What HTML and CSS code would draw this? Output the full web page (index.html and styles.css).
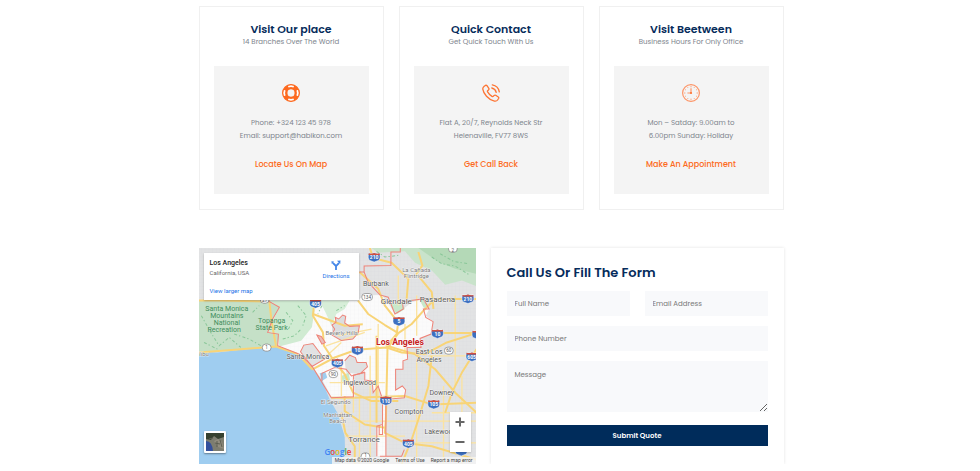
FILE: index.html
```html
<!DOCTYPE html>
<html lang="en">
<head>
  <meta charset="UTF-8">
  <meta name="viewport" content="width=device-width, initial-scale=1">
  <title>Contact</title>
  <link rel="stylesheet" href="styles.css">
</head>
<body>
  <main class="container">
    <section class="cards">
      <article class="card">
        <h2>Visit Our place</h2>
        <p class="subtitle">14 Branches Over The World</p>
        <div class="card-box">
          <svg class="icon" viewBox="0 0 18 18" fill="none" stroke="#fd6a20">
            <circle cx="9" cy="9" r="6.2" stroke-width="4.6"/>
            <g stroke="#fff" stroke-width="2">
              <path d="M6.2 2.6Q9 1.6 11.8 2.6M6.2 15.4Q9 16.4 11.8 15.4M2.6 6.2Q1.6 9 2.6 11.8M15.4 6.2Q16.4 9 15.4 11.8"/>
            </g>
            <circle cx="9" cy="9" r="8.4" stroke-width="1.1"/>
            <circle cx="9" cy="9" r="4.2" stroke-width="1.1"/>
          </svg>
          <p>Phone: +324 123 45 978<br>Email: support@habikon.com</p>
          <a href="#map">Locate Us On Map</a>
        </div>
      </article>
      <article class="card">
        <h2>Quick Contact</h2>
        <p class="subtitle">Get Quick Touch With Us</p>
        <div class="card-box">
          <svg class="icon" viewBox="0 0 18 18" fill="none" stroke="#fd7433" stroke-width="1.3" stroke-linecap="round" stroke-linejoin="round">
            <path d="M2.2 2.3L3.4 1.4Q4.3.9 5 1.7L6.8 4.3Q7.3 5.2 6.5 5.9L5.6 6.7Q5.2 7.2 5.6 7.9Q7.2 10.7 10 12.4Q10.8 12.8 11.3 12.3L12.2 11.4Q12.9 10.8 13.7 11.3L16.3 13Q17.1 13.7 16.6 14.5L15.6 16Q14.6 17.5 12.4 17.1Q8.4 16.4 4.5 12.2Q1.2 8.6.8 5.2Q.6 3.5 2.2 2.3Z"/>
            <path d="M10.3.8Q16.3 1.8 17.3 7.8M9.8 4Q13.4 4.8 14.2 8.4"/>
          </svg>
          <p>Flat A, 20/7, Reynolds Neck Str<br>Helenaville, FV77 8WS</p>
          <a href="#form">Get Call Back</a>
        </div>
      </article>
      <article class="card">
        <h2>Visit Beetween</h2>
        <p class="subtitle">Business Hours For Only Office</p>
        <div class="card-box">
          <svg class="icon" viewBox="0 0 18 18" fill="none" stroke="#fd9567">
            <circle cx="9" cy="9" r="8.4" stroke-width="1.2"/>
            <path d="M9 2v1.4M9 14.6V16M2 9h1.4M14.6 9H16M5.5 3l.5.9M12.5 3l-.5.9M3 5.5l.9.5M15 5.5l-.9.5M3 12.5l.9-.5M15 12.5l-.9-.5M5.5 15l.5-.9M12.5 15l-.5-.9" stroke-width=".8"/>
            <path d="M9 4.2V9H5.4" stroke-width="1.2"/>
            <circle cx="9" cy="9" r="1.1" fill="#fd7433" stroke="none"/>
          </svg>
          <p>Mon – Satday: 9.00am to<br>6.00pm Sunday: Holiday</p>
          <a href="#form">Make An Appointment</a>
        </div>
      </article>
    </section>

    <section class="contact">
      <div class="map" id="map">
        <svg class="map-canvas" viewBox="3 8 831 645" preserveAspectRatio="xMidYMid slice">
          <defs>
            <pattern id="streets" width="11" height="11" patternUnits="userSpaceOnUse">
              <path d="M0 .5H11M.5 0V11" stroke="#d8d9da" stroke-width="1"/>
            </pattern>
            <pattern id="streets-light" width="12" height="12" patternUnits="userSpaceOnUse">
              <path d="M0 .5H12M.5 0V12" stroke="#f0f1f2" stroke-width="1"/>
            </pattern>
            <g id="shield">
              <path d="M-16-12Q-8-10 0-13Q8-10 16-12Q21 5 13 9L0 14L-13 9Q-21 5-16-12Z" fill="#3c6fc0" stroke="#fff" stroke-width="1.5"/>
              <path d="M-16-12Q-8-10 0-13Q8-10 16-12L17-7H-17Z" fill="#d2503f"/>
            </g>
          </defs>
          <rect x="3" y="8" width="831" height="645" fill="#e2e3e4"/>
          <rect x="3" y="8" width="831" height="645" fill="url(#streets)"/>

          <!-- hills and parks -->
          <path d="M3 165H215L245 185L300 165L340 220L330 260L240 300L3 322Z" fill="#c5e0c7"/>
          <path d="M478 8H834V122L790 105L740 118L700 75L650 52L620 18L540 22L520 8Z" fill="#c9e3cb"/>
          <path d="M660 8H834V85L770 70L720 50Z" fill="#b4d9b7"/>

          <!-- city of Los Angeles -->
          <path d="M215 165H480L495 150L550 148L570 172L590 205L615 190L640 170L675 160L692 190L682 210L704 228L698 265L665 278L668 300L626 305L630 340L614 345V370H592V432L612 420L622 432L618 455L563 460V630H536V540L553 535V460L540 420L525 440L522 405L500 402V380L466 388L470 452H400L372 400L342 360L305 325L240 300L242 265L212 260L225 220L245 185Z" fill="#fbfbfb"/>
          <path d="M215 165H480L495 150L550 148L570 172L590 205L615 190L640 170L675 160L692 190L682 210L704 228L698 265L665 278L668 300L626 305L630 340L614 345V370H592V432L612 420L622 432L618 455L563 460V630H536V540L553 535V460L540 420L525 440L522 405L500 402V380L466 388L470 452H400L372 400L342 360L305 325L240 300L242 265L212 260L225 220L245 185Z" fill="url(#streets-light)"/>
          <path d="M215 165H335L350 195L342 245L310 285L245 302L240 265L212 258L228 220L245 185Z" fill="#d0ebd2"/>
          <path d="M365 165H455L440 190L415 205L400 240L385 205Z" fill="#d7eed8"/>
          <path d="M575 175L608 170L620 190L596 205ZM430 390L452 380L456 402L434 408ZM664 165L678 160L690 180L677 188Z" fill="#c8e8ca"/>
          <path d="M402 238L414 230L412 215L422 220L434 208L443 212L440 232L455 242L484 240L480 262L464 280L430 284L402 268Z" fill="#dcdddf"/>
          <path d="M308 318L318 298L345 293L380 340L342 362Z" fill="#e1e2e3"/>
          <path d="M440 345L455 328L472 335L477 350L504 350L508 363L484 385L444 380Z" fill="#dfe0e1"/>
          <g fill="none" stroke="#8ac799" stroke-width="3" stroke-dasharray="9 6 4 7">
            <path d="M12 210L40 260L65 300L95 275L130 305M110 265L155 280L190 300M165 200L185 180M265 200L285 225L272 250M300 180L325 210L315 240M372 180L360 205M415 195L440 180M700 35L730 55L770 62L815 90M725 25L765 48L810 55M535 18L560 35L600 30M255 280L290 270L310 250M20 290L60 310"/>
          </g>

          <!-- ocean -->
          <path d="M3 318L60 320L130 312L240 303L300 325L345 370L373 405L395 460L418 500L440 570L441 615L425 653H3Z" fill="#9fcdf0"/>
          <path d="M365 382L382 378L388 395L372 405Z" fill="#9fcdf0"/>

          <!-- minor roads -->
          <g fill="none" stroke="#fbe3a0" stroke-width="4">
            <path d="M484 450V653M516 330V653M655 340V653M735 420V653M790 390V653M395 410H560M470 525H834M440 570H620M640 590H834M384 300L500 260M420 270L520 250M430 340V450M540 235V450M620 235V320M690 330H834M466 400V500M700 500H834M370 345L430 290M600 90V180M655 150V270M770 150V420"/>
          </g>
          <!-- freeways -->
          <g fill="none" stroke="#f8d477" stroke-width="6" stroke-linejoin="round">
            <path d="M3 165H60L215 168L222 230L235 300"/>
            <path d="M3 320L130 310L235 302L300 325L345 372"/>
            <path d="M350 165L345 210L375 260L378 300L408 345L440 385L465 440L520 465H600"/>
            <path d="M345 370L410 335L475 312L565 305L610 320L680 325L745 290L834 262"/>
            <path d="M484 80L540 130L560 180L600 230L595 265L565 300L650 325L710 370L770 440L834 500"/>
            <path d="M480 165L510 205L560 238L600 262L640 235L680 190L710 160H834"/>
            <path d="M515 8L525 38L580 52L630 100L625 160M660 20L672 60L655 85L700 140L705 190"/>
            <path d="M568 300L563 520L560 560L620 590L700 600L834 640"/>
            <path d="M345 205L440 240L494 236M470 455L620 450L700 475L834 470"/>
            <path d="M600 262L570 305M720 262L834 262M700 330L690 420L660 520L640 580L610 653"/>
            <path d="M834 310L790 380L760 440L740 500M440 450V495L500 535L560 545"/>
            <path d="M400 455H470M535 270V530M430 500L442 560L470 600V653"/>
          </g>
          <!-- city limits -->
          <g fill="none" stroke="#ee8378" stroke-width="3">
            <path d="M210 165L245 185L225 220L210 260L242 265L240 300L305 325L342 360L400 455L466 452V388L500 380V402L522 405L525 440L540 420L553 460V535L536 540V630M553 535V565H543V540M545 630H610L618 610"/>
            <path d="M498 82V62L578 60V20H606V8M484 80H498L510 110L545 148L570 155L590 205L615 190L612 168L675 160L692 190L675 190L682 215L704 228L698 265L665 278L668 305L626 305L628 340L614 345V370H592V432L612 420L622 432L618 455L563 460V630"/>
            <path d="M402 238L414 230L412 215L422 220L434 208L443 212L440 232L455 242L484 240L480 262L464 280L430 284L402 268L410 250Z"/>
            <path d="M308 318L318 298L345 293L380 340L342 362Z"/>
            <path d="M372 405V382L410 365L444 370L460 390L500 378M440 345L455 328L472 335L477 350L504 350L508 363L484 385"/>
            <path d="M357 268L370 272L382 290L372 295Z" fill="#ecbdb8"/>
          </g>

          <g class="shields">
            <use href="#shield" x="528" y="36"/><text x="528" y="42">210</text>
            <use href="#shield" x="808" y="160"/><text x="808" y="166">210</text>
            <use href="#shield" x="353" y="174"/><text x="353" y="180">405</text>
            <use href="#shield" x="602" y="227"/><text x="602" y="233">5</text>
            <use href="#shield" x="717" y="264"/><text x="717" y="270">10</text>
            <use href="#shield" x="478" y="314"/><text x="478" y="320">10</text>
            <use href="#shield" x="418" y="352"/><text x="418" y="358">405</text>
            <use href="#shield" x="563" y="464"/><text x="563" y="470">110</text>
            <use href="#shield" x="706" y="475"/><text x="706" y="481">105</text>
            <use href="#shield" x="630" y="592"/><text x="630" y="598">405</text>
            <use href="#shield" x="820" y="333"/><text x="819" y="339">605</text>
            <use href="#shield" x="838" y="267"/>
            <use href="#shield" x="788" y="615"/>
          </g>
          <g class="routes">
            <rect x="491" y="144" width="32" height="21" rx="10"/><text x="507" y="160">134</text>
            <rect x="194" y="295" width="26" height="21" rx="10"/><text x="207" y="311">1</text>
            <rect x="393" y="374" width="26" height="21" rx="10"/><text x="406" y="390">90</text>
            <rect x="738" y="304" width="26" height="21" rx="10"/><text x="751" y="320">60</text>
            <rect x="188" y="152" width="26" height="21" rx="10"/><text x="201" y="168">27</text>
            <rect x="750" y="0" width="26" height="21" rx="10"/><text x="763" y="19">2</text>
            <rect x="489" y="620" width="26" height="21" rx="10"/><text x="502" y="633">1</text>
          </g>

          <g class="parks">
            <text x="88" y="196">Santa Monica</text>
            <text x="88" y="218">Mountains</text>
            <text x="88" y="239">National</text>
            <text x="80" y="260">Recreation</text>
            <text x="222" y="232">Topanga</text>
            <text x="222" y="253">State Park</text>
          </g>
          <g class="towns">
            <text x="533" y="122">Burbank</text>
            <text x="330" y="339">Santa Monica</text>
            <text x="692" y="325">East Los</text>
            <text x="692" y="349">Angeles</text>
            <text x="485" y="418">Inglewood</text>
            <text x="730" y="446">Downey</text>
            <text x="632" y="505">Compton</text>
            <text x="726" y="562">Lakewood</text>
          </g>
          <g class="towns towns-large">
            <text x="594" y="176">Glendale</text>
            <text x="717" y="168">Pasadena</text>
            <text x="498" y="586">Torrance</text>
          </g>
          <g class="towns towns-small">
            <text x="654" y="80">La Cañada</text>
            <text x="654" y="98">Flintridge</text>
            <text x="431" y="267">Beverly Hills</text>
            <text x="413" y="473">El Segundo</text>
            <text x="419" y="512">Manhattan</text>
            <text x="419" y="530">Beach</text>
            <text x="20" y="331">libu</text>
          </g>
          <text class="city-name" x="605" y="297">Los Angeles</text>
        </svg>

        <div class="place">
          <div class="place-info">
            <strong>Los Angeles</strong>
            <span>California, USA</span>
            <a href="#map">View larger map</a>
          </div>
          <a class="directions" href="#map">
            <svg viewBox="0 0 10 10" fill="none" stroke="#4285e8" stroke-width="1.8">
              <path d="M5 10V6L8 3M5 6L1.8 2.8"/>
              <path d="M6 .8L9.5.5L9.2 4ZM.4 1.2L3 1.4L.8 4Z" fill="#4285e8" stroke="none"/>
            </svg>
            Directions
          </a>
        </div>

        <button class="satellite" type="button" aria-label="Satellite view">
          <svg viewBox="0 0 18 18">
            <rect width="18" height="18" fill="#7d7d70"/>
            <path d="M0 0H18V4L12 6L8 3L5 7L0 6Z" fill="#35402f"/>
            <path d="M8 8L12 6L16 9L18 16L12 14Z" fill="#918c7e"/>
            <path d="M3 6L7 5M9 10L14 11M11 8V14M14 7L16 14" stroke="#5d5f52"/>
            <path d="M0 8Q6 8 7 18H0Z" fill="#34509c"/>
          </svg>
        </button>

        <div class="zoom">
          <button type="button" aria-label="Zoom in"><svg viewBox="0 0 10 10"><path d="M5 .5V9.5M.5 5H9.5"/></svg></button>
          <button type="button" aria-label="Zoom out"><svg viewBox="0 0 10 10"><path d="M.5 5H9.5"/></svg></button>
        </div>

        <div class="google"><span class="blue">G</span><span class="red">o</span><span class="yellow">o</span><span class="blue">g</span><span class="green">l</span><span class="red">e</span></div>
        <div class="map-footer">
          <span>Map data ©2020 Google</span>
          <a href="#map">Terms of Use</a>
          <a href="#map">Report a map error</a>
        </div>
      </div>

      <form class="quote-form" id="form">
        <h2>Call Us Or Fill The Form</h2>
        <div class="fields">
          <input type="text" name="name" placeholder="Full Name" aria-label="Full Name">
          <input type="email" name="email" placeholder="Email Address" aria-label="Email Address">
          <input class="wide" type="tel" name="phone" placeholder="Phone Number" aria-label="Phone Number">
          <textarea class="wide" name="message" placeholder="Message" aria-label="Message"></textarea>
        </div>
        <button class="submit" type="submit">Submit Quote</button>
      </form>
    </section>
  </main>
</body>
</html>
```
FILE: styles.css
```css
* {
  box-sizing: border-box;
}
body {
  margin: 0;
  background: #fff;
  color: #7d848d;
  font-family: Poppins, Inter, sans-serif;
  font-size: 7px;
}
h2, p {
  margin: 0;
}
a {
  text-decoration: none;
}
button {
  padding: 0;
  border: none;
  cursor: pointer;
}
.container {
  max-width: 587px;
  margin: 0 auto;
  padding: 6px 0 0 2px;
}

/* info cards */
.cards {
  display: grid;
  grid-template-columns: repeat(3, 1fr);
  gap: 15px;
}
.card {
  padding: 14px 14px 15px;
  border: 1px solid #f0f0f0;
  text-align: center;
}
.card h2 {
  color: #062c5b;
  font-size: 11px;
  font-weight: 600;
  line-height: 16px;
}
.subtitle {
  line-height: 10px;
}
.card-box {
  margin-top: 19px;
  padding: 18px 8px 23px;
  background: #f4f4f4;
}
.icon {
  display: block;
  width: 18px;
  height: 18px;
  margin: 0 auto 14px;
}
.card-box p {
  line-height: 13px;
}
.card-box a {
  display: block;
  margin-top: 17px;
  color: #fd6a20;
  font-size: 8px;
  font-weight: 500;
  line-height: 12px;
}

/* map and form */
.contact {
  display: grid;
  grid-template-columns: 277fr 293fr;
  gap: 15px;
  margin-top: 38px;
}
.map {
  position: relative;
  overflow: hidden;
  font-family: Roboto, sans-serif;
}
.map-canvas {
  position: absolute;
  width: 100%;
  height: 100%;
}
.map-canvas text {
  text-anchor: middle;
}
.shields text {
  fill: #fff;
  font-size: 15px;
  font-weight: 700;
}
.routes rect {
  fill: #fff;
  stroke: #777;
  stroke-width: 2;
}
.routes text {
  fill: #555;
  font-size: 14px;
}
.parks text {
  fill: #3f8d5c;
  font-size: 21px;
}
.towns text {
  fill: #555;
  font-size: 21px;
  stroke: #fff;
  stroke-width: 2px;
  paint-order: stroke;
}
.towns-large text {
  font-size: 24px;
}
.towns-small text {
  fill: #777;
  font-size: 18px;
}
.map-canvas .city-name {
  fill: #c5221f;
  font-size: 26px;
  font-weight: 700;
  stroke: #fff;
  stroke-width: 3px;
  paint-order: stroke;
}
.place {
  position: absolute;
  top: 5px;
  left: 5px;
  display: flex;
  justify-content: space-between;
  width: 155px;
  padding: 5px 9px 4px 6px;
  background: #fff;
  box-shadow: 0 1px 2px rgba(0, 0, 0, 0.25);
}
.place-info {
  display: flex;
  flex-direction: column;
  color: #666;
  font-size: 6px;
  line-height: 10px;
}
.place-info strong {
  color: #222;
  font-size: 7px;
  font-weight: 500;
}
.place-info a {
  margin-top: 8px;
  color: #1a73e8;
}
.directions {
  display: flex;
  flex-direction: column;
  align-items: center;
  gap: 1px;
  padding-top: 2px;
  color: #1a73e8;
  font-size: 6px;
  line-height: 9px;
}
.directions svg {
  width: 10px;
  height: 10px;
}
.satellite {
  position: absolute;
  bottom: 11px;
  left: 5px;
  width: 22px;
  height: 22px;
  border: 2px solid #fff;
  border-radius: 1px;
  box-shadow: 0 1px 2px rgba(0, 0, 0, 0.4);
}
.satellite svg {
  display: block;
}
.zoom {
  position: absolute;
  right: 5px;
  bottom: 12px;
  display: grid;
  background: #fff;
  box-shadow: 0 1px 2px rgba(0, 0, 0, 0.2);
}
.zoom button {
  display: grid;
  place-items: center;
  width: 21px;
  height: 20px;
  background: none;
}
.zoom svg {
  width: 10px;
  height: 10px;
  stroke: #666;
  stroke-width: 2;
}
.google {
  position: absolute;
  bottom: 7px;
  left: 126px;
  font-family: "Open Sans", sans-serif;
  font-size: 8px;
  font-weight: 600;
  line-height: 10px;
}
.blue { color: #4285f4; }
.red { color: #ea4335; }
.yellow { color: #fbbc05; }
.green { color: #34a853; }
.map-footer {
  position: absolute;
  right: 0;
  bottom: 0;
  display: flex;
  gap: 6px;
  padding: 0 3px;
  background: rgba(245, 245, 245, 0.8);
  font-size: 5px;
  line-height: 7px;
}
.map-footer span, .map-footer a {
  color: #444;
}
.quote-form {
  padding: 16px 16px 18px;
  box-shadow: 0 0 3px rgba(0, 0, 0, 0.12);
}
.quote-form h2 {
  margin-bottom: 9px;
  color: #062c5b;
  font-size: 13px;
  font-weight: 600;
  line-height: 18px;
}
.fields {
  display: grid;
  grid-template-columns: 1fr 1fr;
  gap: 10px 15px;
}
.fields input, .fields textarea {
  width: 100%;
  height: 25px;
  padding: 0 8px;
  border: none;
  border-radius: 0;
  background: #f8f9fb;
  color: #555;
  font-family: inherit;
  font-size: 7px;
}
.fields .wide {
  grid-column: 1 / -1;
}
.fields textarea {
  display: block;
  height: 51px;
  padding-top: 9px;
}
::placeholder {
  color: #777;
}
.submit {
  width: 100%;
  height: 21px;
  margin-top: 13px;
  background: #002c5b;
  color: #fff;
  font-family: inherit;
  font-size: 7px;
  font-weight: 600;
}
```
